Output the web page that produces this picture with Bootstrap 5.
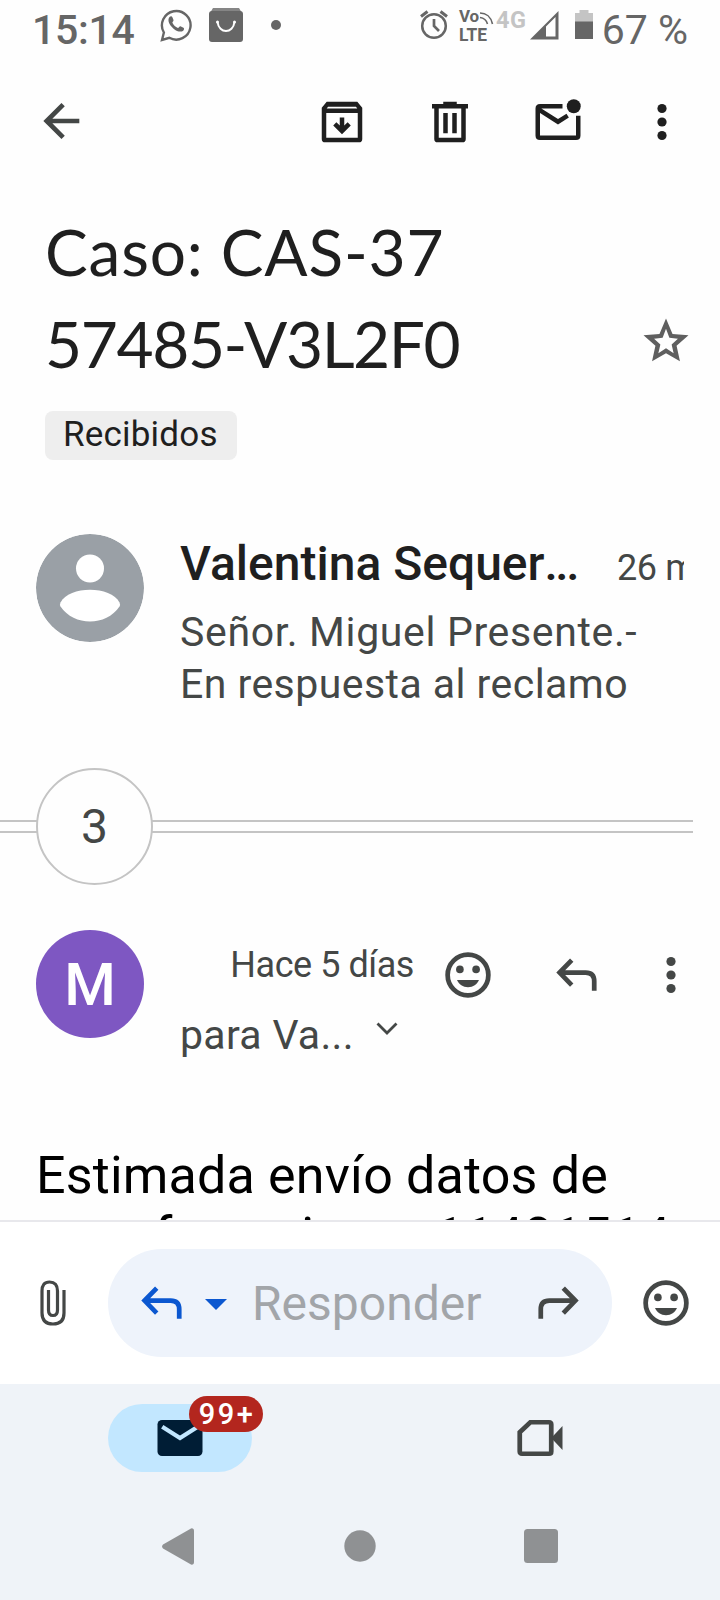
<!DOCTYPE html>
<html lang="es">
<head>
<meta charset="utf-8">
<meta name="viewport" content="width=device-width, initial-scale=1">
<title>Caso: CAS-3757485-V3L2F0</title>
<link href="https://cdn.jsdelivr.net/npm/bootstrap@5.3.0/dist/css/bootstrap.min.css" rel="stylesheet">
<style>
body{font-family:Roboto,"Liberation Sans",sans-serif;color:#1f1f1f;background:#fefefe;width:720px;height:1600px;overflow:hidden}
svg{display:block;flex:none}
.ic{width:54px;height:54px;fill:currentColor}
.soft{color:#444746}
.mail-view{height:1220px}
.statusbar{height:60px;color:#666;padding:0 32px 0 32px}
.clock{font-size:41px;font-weight:500;line-height:60px;white-space:pre}
.tiny{overflow:visible}
.actions{height:123px;padding:0 31px 0 35px}
.subject{font-family:Lato,sans-serif;font-size:64px;line-height:92px;font-weight:400;margin:23px 0 0}
.subject span{display:block}
.chip{width:192px;height:49px;background:#eee;border-radius:8px;margin:21px 0 0 45px;font-size:35px;line-height:48px;padding-left:18px;letter-spacing:.2px}
.avatar{width:108px;height:108px;flex:none;border-radius:50%}
.msg{padding:0 36px}
.sender{font-size:48px;line-height:56px;font-weight:500}
.ago{font-size:36px;white-space:nowrap}
.snippet{font-size:41px;line-height:52px;margin-top:14px;white-space:nowrap}
.thread{height:117px;margin-top:58px;width:693px;padding-left:36px}
.rails{left:0;right:0;top:52px;height:13px;border:solid #c4c4c4;border-width:2px 0}
.count{width:117px;height:117px;border:2px solid #c4c4c4;background:#fefefe;font-size:48px}
.initial{background:#7e57c2;color:#fff;font-size:59px;font-weight:500;padding-top:2px}
.body-text{font-size:52px;line-height:61px;color:#000;padding-left:36px;white-space:nowrap;letter-spacing:.18px}
.composer{height:164px;border-top:2px solid #e8e8ec;background:#fff}
.reply-pill{width:504px;height:108px;background:#eef3fb}
.hint{font-size:48px;color:#a2a5a9}
.tabs{height:108px;background:#eff3f8}
.tab-on{width:144px;height:68px;background:#c2e7ff;color:#001d35}
.count-badge{left:81px;top:-8px;width:74px;height:36px;background:#b3261e;color:#fff;font-size:29px;line-height:36px;font-weight:500;letter-spacing:2.5px;padding-left:2px}
.sysnav{height:108px;background:#eff3f8;color:#8f9193}
</style>
</head>
<body>
<svg width="0" height="0" class="position-absolute">
 <symbol id="more" viewBox="0 0 24 24"><circle cx="12" cy="6" r="2.05"/><circle cx="12" cy="12" r="2.05"/><circle cx="12" cy="18" r="2.05"/></symbol>
 <symbol id="smile" viewBox="0 0 24 24"><circle cx="12" cy="12" r="9.050" fill="none" stroke="currentColor" stroke-width="2.100"/><circle cx="8.400" cy="9.500" r="1.700"/><circle cx="15.600" cy="9.500" r="1.700"/><path d="M7.100 14.200h9.800c-.9 2-2.600 3.200-4.900 3.200s-4-1.200-4.900-3.200z"/></symbol>
 <symbol id="reply" viewBox="0 0 24 24"><path d="M10.100 5.400 4.700 10.900 10.100 16.500M4.700 10.900H16.300Q20.100 10.900 20.100 14.800V19" fill="none" stroke="currentColor" stroke-width="2.100"/></symbol>
</svg>

<div class="mail-view overflow-hidden">
 <div class="statusbar d-flex align-items-center">
  <span class="clock" style="width:129px;letter-spacing:-.3px">15:14</span>
  <svg width="32" height="34" viewBox="0 0 32 34" style="margin-top:-10px"><path d="M2 32 3.900 24.500A14.300 14.300 0 1 1 9.300 29.800Z" fill="none" stroke="#666" stroke-width="2.400"/><path d="M9.500 9c1.300-1.200 2.500-.8 3 .5l1 2.600c.3 1-1.200 1.800-1.100 2.600 1.300 2.500 3 4.200 5.500 5.200.9.100 1.600-1.900 2.600-1.600l3 1.500c1.100.6.5 2.400-.6 3.100-2.300 1.500-5.900.6-9.600-2.500-3.700-3.200-6.400-8.200-3.800-11.400z" fill="#666"/></svg>
  <svg width="34" height="34" viewBox="0 0 34 34" style="margin:-10px 0 0 17px"><path d="M4 0H30L33 5H1Z" fill="#858585"/><rect y="3" width="34" height="31" rx="3" fill="#666"/><path d="M8.500 14C10 26 24 26 25.500 14" fill="none" stroke="#fff" stroke-width="2"/><circle cx="8.500" cy="14" r="1.500" fill="#fff"/><circle cx="25.500" cy="14" r="1.500" fill="#fff"/></svg>
  <svg width="10" height="10" style="margin:-10px 0 0 28px"><circle cx="5" cy="5" r="5" fill="#666"/></svg>
  <svg width="28" height="30" viewBox="0 0 28 30" fill="none" stroke="#666" style="margin:-10px 0 0 139px"><circle cx="14" cy="16" r="11.800" stroke-width="2.500"/><path d="M14 9v7l5 5" stroke-width="2.700"/><path d="M1 6.500 7.500 1.500M27 6.500 20.500 1.500" stroke-width="3"/></svg>
  <svg class="tiny" width="36" height="34" viewBox="0 0 36 34" fill="#666" style="margin:-8px 0 0 11px"><text x="0" y="12.500" font-size="17" font-weight="700" textLength="20">Vo</text><text x="0" y="32" font-size="18" font-weight="700" textLength="28" lengthAdjust="spacingAndGlyphs">LTE</text><path d="M21 4c6 0 11 4 12.500 11M21 8.500c4 .5 6.500 3 7.500 6.500" fill="none" stroke="#666" stroke-width="1.600"/></svg>
  <svg class="tiny" width="30" height="20" viewBox="0 0 30 20" fill="#c4c4c4" style="margin:-20px 0 0 1px"><text x="0" y="17.500" font-size="23.500" font-weight="700" textLength="30">4G</text></svg>
  <svg width="29" height="29" viewBox="0 0 29 29" style="margin:-9px 0 0 4px"><path fill="#666" fill-rule="evenodd" d="M0 28.500 28.500 0V28.500ZM16 15.500V25.500H25.500V6Z"/></svg>
  <svg width="18" height="30" viewBox="0 0 18 30" style="margin:-11px 0 0 16px"><path d="M0 3H4.500V0H13.500V3H18V12H0Z" fill="#c4c4c4"/><path d="M0 11.500H18V29H0Z" fill="#666"/></svg>
  <span class="clock" style="margin-left:9px;font-weight:400">67 %</span>
 </div>

 <div class="actions d-flex align-items-center">
  <svg class="ic soft me-auto" viewBox="0 0 24 24" style="margin-top:-2px"><path d="M19.700 12H5M12.500 4.700 5.200 12l7.300 7.300" fill="none" stroke="currentColor" stroke-width="2.100"/></svg>
  <svg class="ic" viewBox="0 0 24 24"><path fill-rule="evenodd" d="M5.200 3H18.800L21 5.700V19.500Q21 21 19.500 21H4.500Q3 21 3 19.500V5.700ZM5.800 5.200 5.200 6H18.800L18.200 5.200ZM5 8V19H19V8Z"/><path d="M11 10h2v3.500l1.500-1.400 1.400 1.400L12 17.400l-3.900-3.900 1.400-1.400 1.500 1.400z"/></svg>
  <svg class="ic" viewBox="0 0 24 24" style="margin-left:54px"><path fill-rule="evenodd" d="M4 4H9V3H15V4H20V6H19V19.500Q19 21 17.500 21H6.500Q5 21 5 19.500V6H4ZM7 6V19H17V6Z"/><path d="M9 8h2v9H9zM13 8h2v9h-2z"/></svg>
  <svg class="ic" viewBox="0 0 24 24" style="margin-left:54px"><path d="M14 5H4Q3 5 3 6V18Q3 19 4 19H20Q21 19 21 18V9.200M3 6.200 12 11.900 16.300 9.200" fill="none" stroke="currentColor" stroke-width="2"/><circle cx="19" cy="5" r="3.100"/></svg>
  <svg class="ic" viewBox="0 0 24 24" style="margin-left:50px"><use href="#more"/></svg>
 </div>

 <div class="d-flex align-items-end justify-content-between" style="padding:0 27px 0 45px">
  <h1 class="subject"><span style="letter-spacing:.8px">Caso: CAS-37</span><span style="letter-spacing:-1.4px">57485-V3L2F0</span></h1>
  <svg class="ic" viewBox="0 0 24 24" style="margin-bottom:22px;color:#5f5f5f"><path fill-rule="evenodd" d="M12 2 14.900 8.900 22 9.400 16.700 14.100 18.200 21 12 17.400 5.800 21 7.300 14.100 2 9.400 9.100 8.900ZM12 6.600 10.500 10.600 6.700 11 9.500 13.500 8.600 17.400 12 15.200 15.400 17.400 14.500 13.500 17.300 11 13.500 10.600Z"/></svg>
 </div>
 <div class="chip">Recibidos</div>

 <div class="msg d-flex" style="margin-top:74px">
  <svg class="avatar" viewBox="0 0 108 108"><circle cx="54" cy="54" r="54" fill="#9aa0a6"/><circle cx="54" cy="34.500" r="14" fill="#fff"/><path d="M24.500 68.500C33 51.500 75 51.500 83.500 68.500Q84.500 70.500 83.500 72.500C70 92.500 38 92.500 24.500 72.500Q23.500 70.500 24.500 68.500Z" fill="#fff"/></svg>
  <div style="margin:2px 0 0 36px;width:504px">
   <div class="d-flex align-items-baseline overflow-hidden" style="height:56px">
    <span class="sender text-nowrap flex-shrink-0" style="width:437px">Valentina Sequer<span style="letter-spacing:-2.500px">...</span></span><span class="ago soft" style="line-height:40px;letter-spacing:-.4px">26 min</span>
   </div>
   <div class="snippet soft"><div style="letter-spacing:.65px">Señor. Miguel Presente.-</div><div style="letter-spacing:.45px">En respuesta al reclamo</div></div>
  </div>
 </div>

 <div class="thread position-relative">
  <div class="rails position-absolute"></div>
  <div class="count soft rounded-circle position-relative d-flex align-items-center justify-content-center">3</div>
 </div>

 <div class="msg d-flex" style="margin-top:45px;padding-right:22px">
  <div class="avatar initial d-flex align-items-center justify-content-center">M</div>
  <div class="soft" style="width:242px;margin-left:36px">
   <div class="ago text-end" style="line-height:50px;margin-top:10px;width:234px;letter-spacing:-.45px">Hace 5 días</div>
   <div class="d-flex align-items-center" style="margin-top:20px;font-size:41px;line-height:50px;white-space:nowrap">
    <span style="width:196px;letter-spacing:.3px">para Va...</span>
    <svg width="22" height="14" viewBox="0 0 22 14" style="margin-top:-13px"><path d="M1.500 1.500 11 11 20.500 1.500" fill="none" stroke="currentColor" stroke-width="2.800"/></svg>
   </div>
  </div>
  <div class="soft d-flex" style="margin:18px 0 0 19px;height:54px">
   <svg class="ic"><use href="#smile"/></svg>
   <svg class="ic" style="margin-left:54px"><use href="#reply"/></svg>
   <svg class="ic" style="margin-left:41px"><use href="#more"/></svg>
  </div>
 </div>
 <div class="body-text" style="margin-top:85px">Estimada envío datos de<br>transferencia no <span style="margin-left:8px">11481514</span></div>
</div>

<div class="composer soft d-flex align-items-center">
 <svg width="26" height="46" viewBox="0 0 26 46" style="margin-left:40px" fill="none" stroke="currentColor" stroke-width="3.200"><path d="M24 10V33Q24 44 13 44Q2 44 2 33V11Q2 2 9.500 2Q17.500 2 17.500 11V30Q17.500 35.500 13 35.500Q8.500 35.500 8.500 30V10"/></svg>
 <div class="reply-pill rounded-pill d-flex align-items-center" style="margin-left:42px">
  <svg class="ic" style="margin-left:26px;color:#0b57d0"><use href="#reply"/></svg>
  <svg width="22" height="11" style="margin:2px 25px 0 17px"><path d="M0 0H22L11 11Z" fill="#0b57d0"/></svg>
  <span class="hint" style="width:280px;padding-top:2px">Responder</span>
  <svg class="ic" style="transform:scaleX(-1)"><use href="#reply"/></svg>
 </div>
 <svg class="ic" style="margin-left:27px"><use href="#smile"/></svg>
</div>

<nav class="tabs d-flex">
 <div class="tab-on rounded-pill position-relative d-flex align-items-center justify-content-center" style="margin:20px 0 0 108px">
  <svg class="ic" viewBox="0 0 24 24"><rect x="2" y="4" width="20" height="16" rx="2"/><path d="M4.100 7 12 12 19.900 7" fill="none" stroke="#c2e7ff" stroke-width="1.900"/></svg>
  <span class="count-badge rounded-pill position-absolute text-center">99+</span>
 </div>
 <svg class="ic soft" viewBox="0 0 24 24" style="margin:27px 0 0 261px"><path d="M7.700 5H16Q17 5 17 6V18Q17 19 16 19H4Q3 19 3 18V9.500Z" fill="none" stroke="currentColor" stroke-width="2.100"/><path d="M17 12 22 6.700V17.300Z"/></svg>
</nav>
<div class="sysnav d-flex align-items-center">
 <svg width="33" height="37" viewBox="0 0 33 37" style="margin-left:162px" fill="currentColor"><path d="M1 16.500 29 .4Q32 0 32 3V34Q32 37 29 36.600L1 20.500Q-.8 18.500 1 16.500Z"/></svg>
 <svg width="32" height="32" style="margin-left:149px"><circle cx="16" cy="16" r="15.700" fill="currentColor"/></svg>
 <svg width="34" height="34" style="margin-left:148px"><rect width="34" height="34" rx="3.500" fill="currentColor"/></svg>
</div>
<script src="https://cdn.jsdelivr.net/npm/bootstrap@5.3.0/dist/js/bootstrap.bundle.min.js"></script>
</body>
</html>
